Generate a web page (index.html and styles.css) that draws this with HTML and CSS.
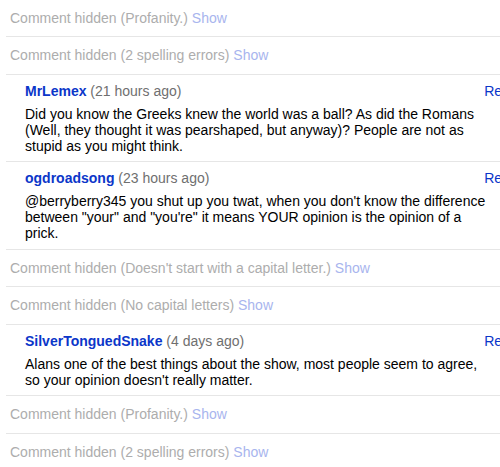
FILE: index.html
```html
<!DOCTYPE html>
<html lang="en">
<head>
  <meta charset="UTF-8">
  <title>Comments</title>
  <link rel="stylesheet" href="styles.css">
</head>
<body>
  <!-- comment list -->
  <ul class="comments">
    <li class="hidden-row">Comment hidden (Profanity.) <a href="#" class="show">Show</a></li>
    <li class="hidden-row">Comment hidden (2 spelling errors) <a href="#" class="show">Show</a></li>
    <li class="comment">
      <div class="comment-head">
        <a href="#" class="reply">Reply</a>
        <a href="#" class="author">MrLemex</a> <span class="time">(21 hours ago)</span>
      </div>
      <p class="comment-body">Did you know the Greeks knew the world was a ball? As did the Romans (Well, they thought it was pearshaped, but anyway)? People are not as stupid as you might think.</p>
    </li>
    <li class="comment">
      <div class="comment-head">
        <a href="#" class="reply">Reply</a>
        <a href="#" class="author">ogdroadsong</a> <span class="time">(23 hours ago)</span>
      </div>
      <p class="comment-body">@berryberry345 you shut up you twat, when you don't know the difference between "your" and "you're" it means YOUR opinion is the opinion of a prick.</p>
    </li>
    <li class="hidden-row">Comment hidden (Doesn't start with a capital letter.) <a href="#" class="show">Show</a></li>
    <li class="hidden-row">Comment hidden (No capital letters) <a href="#" class="show">Show</a></li>
    <li class="comment">
      <div class="comment-head">
        <a href="#" class="reply">Reply</a>
        <a href="#" class="author">SilverTonguedSnake</a> <span class="time">(4 days ago)</span>
      </div>
      <p class="comment-body">Alans one of the best things about the show, most people seem to agree, so your opinion doesn't really matter.</p>
    </li>
    <li class="hidden-row">Comment hidden (Profanity.) <a href="#" class="show">Show</a></li>
    <li class="hidden-row">Comment hidden (2 spelling errors) <a href="#" class="show">Show</a></li>
  </ul>
</body>
</html>
```

FILE: styles.css
```css
body {
  margin: 0;
  overflow: hidden;
  background: #fff;
  font-family: "Liberation Sans", Arial, sans-serif;
  font-size: 14px;
  line-height: 16px;
}
a {
  text-decoration: none;
}
.comments {
  list-style: none;
  margin: -0.5px 0 0 6px;
  padding: 0;
  width: 514px;
}
.hidden-row {
  padding: 10.25px 4px;
  border-bottom: 1px solid #e6e6e6;
  color: #adadad;
}
.show {
  color: #a8b5ee;
}
.comment {
  padding: 8px 0 7.5px 19px;
  border-bottom: 1px solid #e6e6e6;
}
.comment-head {
  overflow: hidden;
}
.author {
  color: #0b36c9;
  font-weight: bold;
}
.time {
  color: #6f6f6f;
}
.reply {
  float: right;
  color: #0b36c9;
}
.comment-body {
  margin: 7px 25px 0 0;
  color: #000;
}
```
